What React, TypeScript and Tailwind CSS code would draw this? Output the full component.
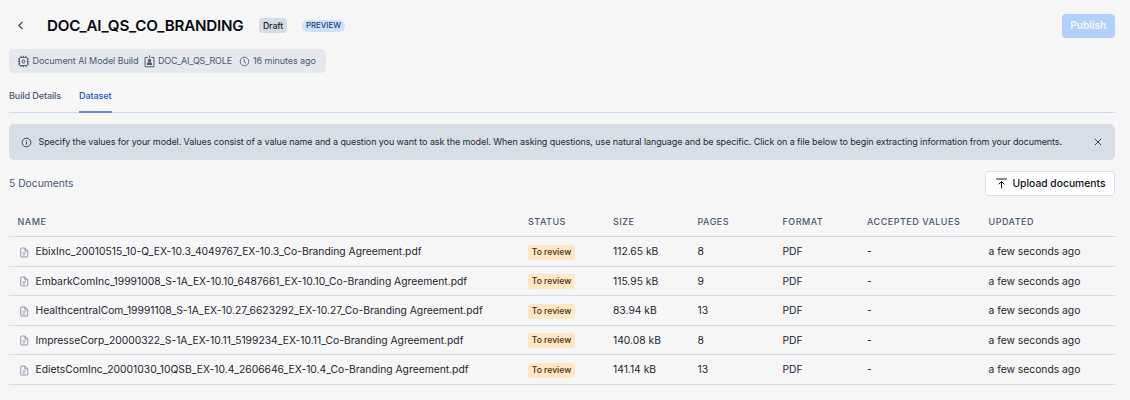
import type { ReactNode } from "react";

type Doc = { name: string; size: string; pages: number };

const documents: Doc[] = [
  { name: "EbixInc_20010515_10-Q_EX-10.3_4049767_EX-10.3_Co-Branding Agreement.pdf", size: "112.65 kB", pages: 8 },
  { name: "EmbarkComInc_19991008_S-1A_EX-10.10_6487661_EX-10.10_Co-Branding Agreement.pdf", size: "115.95 kB", pages: 9 },
  { name: "HealthcentralCom_19991108_S-1A_EX-10.27_6623292_EX-10.27_Co-Branding Agreement.pdf", size: "83.94 kB", pages: 13 },
  { name: "ImpresseCorp_20000322_S-1A_EX-10.11_5199234_EX-10.11_Co-Branding Agreement.pdf", size: "140.08 kB", pages: 8 },
  { name: "EdietsComInc_20001030_10QSB_EX-10.4_2606646_EX-10.4_Co-Branding Agreement.pdf", size: "141.14 kB", pages: 13 },
];

const columns = "grid grid-cols-[510.5px_85px_84.5px_85px_84.5px_121.5px_1fr] items-center pl-[8.5px]";

function Icon({ className, children }: { className: string; children: ReactNode }) {
  return (
    <svg viewBox="0 0 16 16" fill="none" stroke="currentColor" strokeWidth="1.2" className={`shrink-0 ${className}`}>
      {children}
    </svg>
  );
}

function ChipIcon() {
  return (
    <Icon className="size-[13px]">
      <rect x="3" y="3" width="10" height="10" rx="1" />
      <rect x="6.3" y="6.3" width="3.4" height="3.4" rx="1" />
      <path d="M5 3V1M8 3V1M11 3V1M5 15v-2M8 15v-2M11 15v-2M3 5H1M3 8H1M3 11H1M15 5h-2M15 8h-2M15 11h-2" />
    </Icon>
  );
}

function RoleIcon() {
  return (
    <Icon className="size-[13px]">
      <path d="M6 3H2.5v11.5h11V3H10M8 .5v3" />
      <path d="M4.8 12.3V11c0-1.3 1-2 2-2h2.4c1 0 2 .7 2 2v1.3z" fill="currentColor" stroke="none" />
      <circle cx="8" cy="6.7" r="2" fill="currentColor" stroke="none" />
    </Icon>
  );
}

function ClockIcon() {
  return (
    <Icon className="size-[11px]">
      <circle cx="8" cy="8" r="6.3" />
      <path d="M7.5 4v4.5l2.8 2.4" />
    </Icon>
  );
}

function FileIcon() {
  return (
    <Icon className="ml-[1px] size-[11px] text-[#7c879e]">
      <path d="M3.5 1.5h5.2l4 4v8c0 .6-.4 1-1 1H3.5c-.6 0-1-.4-1-1v-11c0-.6.4-1 1-1zM8.5 1.5v4h4M5.3 8.5h4.9M5.3 11.3h3.4" />
    </Icon>
  );
}

function Header() {
  return (
    <header className="flex h-[25px] items-center">
      <Icon className="ml-[5px] size-[13px] text-[#33405c]">
        <path d="M10.5 3.5 6 8l4.5 4.5" strokeWidth="1.5" />
      </Icon>
      <h1 className="ml-[20px] w-[212px] text-[15.2px] leading-6 font-semibold tracking-[-0.21px] text-[#06090f]">
        DOC_AI_QS_CO_BRANDING
      </h1>
      <span className="flex h-[15px] w-[28px] items-center justify-center rounded-[3px] bg-[#d6dce5] text-[8.8px] font-medium tracking-[-0.1px] text-[#1e252f]">
        Draft
      </span>
      <span className="ml-[15px] flex h-[12px] w-[43px] items-center justify-center rounded-full bg-[#cfe0fc] text-[7.8px] font-medium text-[#1e3f78]">
        PREVIEW
      </span>
      <button className="ml-auto h-[24px] w-[53.5px] rounded-[4px] bg-[#b2d0fc] text-[10.3px] font-semibold tracking-[-0.1px] text-[#f4f8ff]">
        Publish
      </button>
    </header>
  );
}

function Details() {
  return (
    <div className="mt-[11px] flex h-[24px] w-[317px] items-center rounded-[5px] bg-[#e5e8ed] pl-[8px] text-[9px] tracking-[-0.07px] text-[#4c5872]">
      <ChipIcon />
      <span className="ml-[2.5px] w-[110.5px] whitespace-nowrap">Document AI Model Build</span>
      <RoleIcon />
      <span className="ml-[2px] w-[81px] whitespace-nowrap tracking-[-0.17px]">DOC_AI_QS_ROLE</span>
      <ClockIcon />
      <span className="ml-[3px] whitespace-nowrap">16 minutes ago</span>
    </div>
  );
}

function Tabs() {
  return (
    <nav className="mt-[6px] flex h-[34px] gap-[18px] border-b border-[#d5dae7] text-[9px] font-medium tracking-[-0.09px]">
      <a className="flex w-[52px] items-center whitespace-nowrap text-[#4c5872]">Build Details</a>
      <a className="-mb-px flex w-[33px] items-center border-b-2 border-[#6f83df] pt-px text-[#1e51cb]">Dataset</a>
    </nav>
  );
}

function Notice() {
  return (
    <div className="mt-[11px] flex h-[36px] items-center rounded-[5px] bg-[#d8dee6] pr-[12.5px] pl-[12px] text-[9px] tracking-[-0.088px] text-[#222b38]">
      <Icon className="size-[11px]">
        <circle cx="8" cy="8" r="6.3" />
        <path d="M8 7.2v4M8 4.7v1.3" />
      </Icon>
      <p className="ml-[6.5px] whitespace-nowrap">
        Specify the values for your model. Values consist of a value name and a question you want to ask the model. When asking
        questions, use natural language and be specific. Click on a file below to begin extracting information from your documents.
      </p>
      <Icon className="ml-auto size-[10px]">
        <path d="m3 3 10 10M13 3 3 13" strokeWidth="1.4" />
      </Icon>
    </div>
  );
}

function Toolbar() {
  return (
    <div className="mt-[11px] flex h-[25px] items-center justify-between">
      <span className="text-[10.3px] text-[#4c5872]">5 Documents</span>
      <button className="flex h-[24.5px] w-[130.5px] items-center rounded-[4px] border border-[#dce0e8] bg-white pl-[9px] text-[10.3px] font-medium text-[#0d1219]">
        <Icon className="size-[13px]">
          <path d="M1.5 2.5h13M8 14V5.5M4.5 9 8 5.5 11.5 9" />
        </Icon>
        <span className="ml-[5px] whitespace-nowrap">Upload documents</span>
      </button>
    </div>
  );
}

function DocumentTable() {
  return (
    <section className="mt-[12px]">
      <div className={`${columns} h-[29px] border-b border-[#d8dce7] text-[9px] font-medium tracking-[0.5px] text-[#4c5872]`}>
        <span>NAME</span>
        <span>STATUS</span>
        <span>SIZE</span>
        <span>PAGES</span>
        <span>FORMAT</span>
        <span>ACCEPTED VALUES</span>
        <span>UPDATED</span>
      </div>
      {documents.map((doc) => (
        <div key={doc.name} className={`${columns} h-[29.5px] border-b border-[#d8dce7] pt-[1.5px] text-[10.3px] text-[#1e252f]`}>
          <span className="flex items-center whitespace-nowrap">
            <FileIcon />
            <span className="ml-[6px]">{doc.name}</span>
          </span>
          <span className="flex h-[15px] w-[47px] items-center justify-center rounded-[3px] bg-[#ffe7c5] text-[8.6px] font-medium whitespace-nowrap text-[#4a2c0b]">
            To review
          </span>
          <span>{doc.size}</span>
          <span>{doc.pages}</span>
          <span>PDF</span>
          <span>-</span>
          <span>a few seconds ago</span>
        </div>
      ))}
    </section>
  );
}

export default function App() {
  return (
    <main className="h-[400px] w-[1130px] overflow-hidden bg-[#f6f6f6] pt-[13px] pr-[15px] pl-[9px] font-['Inter',sans-serif]">
      <Header />
      <Details />
      <Tabs />
      <Notice />
      <Toolbar />
      <DocumentTable />
    </main>
  );
}
